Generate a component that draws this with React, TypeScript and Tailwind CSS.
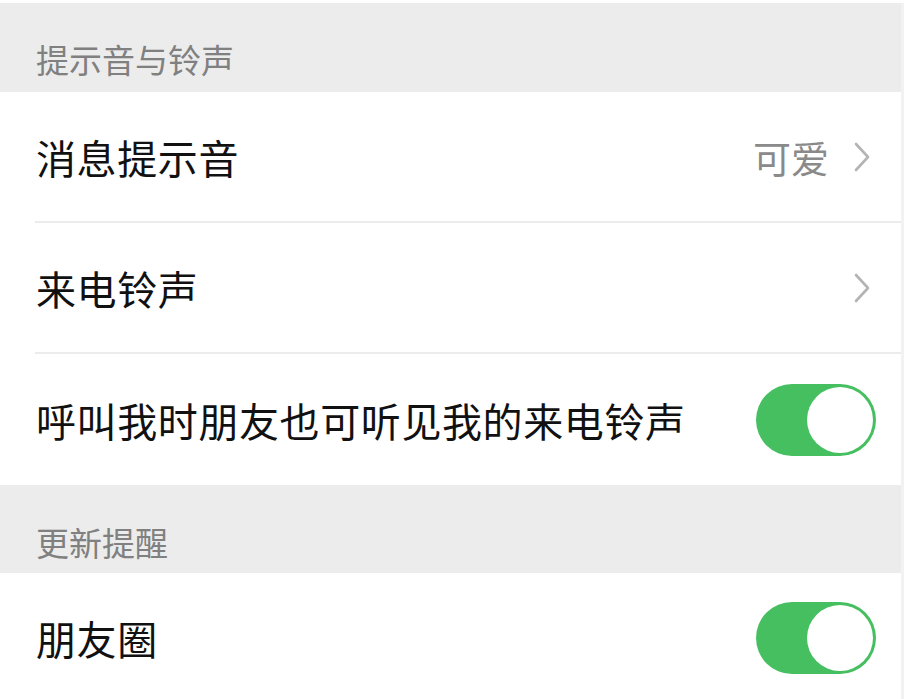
import React from "react";

const font = { fontFamily: '"Noto Sans CJK SC", "Noto Sans", sans-serif' };

function Chevron() {
  return (
    <svg width="18" height="30" viewBox="0 0 18 30" className="shrink-0">
      <path d="M3 2 L15 15 L3 28" fill="none" stroke="#b4b4b4" strokeWidth="2.6" strokeLinecap="round" strokeLinejoin="round" />
    </svg>
  );
}

function Toggle() {
  return (
    <div className="flex h-[72px] w-[120px] shrink-0 items-center justify-end rounded-full bg-[#45bf60] p-[3px]">
      <div className="h-[66px] w-[66px] rounded-full bg-white" />
    </div>
  );
}

function SectionHeader({ title, h, pb }: { title: string; h: string; pb: string }) {
  return (
    <div className={`flex items-end bg-[#ececec] pl-[36px] ${h} ${pb}`}>
      <span className="text-[33px] leading-[33px] text-[#808080]">{title}</span>
    </div>
  );
}

interface RowProps {
  label: string;
  value?: string;
  kind: "link" | "toggle";
  divider?: boolean;
  h: string;
}

function Row({ label, value, kind, divider, h }: RowProps) {
  return (
    <div className="bg-white pl-[35px]">
      <div className={`flex items-center justify-between ${h} ${divider ? "border-b-2 border-[#ececec]" : ""} ${kind === "link" ? "pr-[30px]" : "pr-[25px]"}`}>
        <span className="pl-[1px] text-[40px] leading-none tracking-[0.6px] text-[#111111]">{label}</span>
        {kind === "link" ? (
          <div className="flex items-center gap-[24px]">
            {value && <span className="text-[38px] leading-none text-[#8a8a8a]">{value}</span>}
            <Chevron />
          </div>
        ) : (
          <Toggle />
        )}
      </div>
    </div>
  );
}

export default function App() {
  return (
    <div className="min-h-[699px] w-[904px] overflow-hidden bg-white pt-[3px]" style={font}>
      <div className="border-r-[3px] border-[#f2f2f2]">
        <SectionHeader title="提示音与铃声" h="h-[89px]" pb="pb-[16px]" />
        <Row label="消息提示音" value="可爱" kind="link" divider h="h-[131px]" />
        <Row label="来电铃声" kind="link" divider h="h-[131px]" />
        <Row label="呼叫我时朋友也可听见我的来电铃声" kind="toggle" h="h-[131px]" />
        <SectionHeader title="更新提醒" h="h-[88px]" pb="pb-[14px]" />
        <Row label="朋友圈" kind="toggle" h="h-[130px]" />
      </div>
    </div>
  );
}
